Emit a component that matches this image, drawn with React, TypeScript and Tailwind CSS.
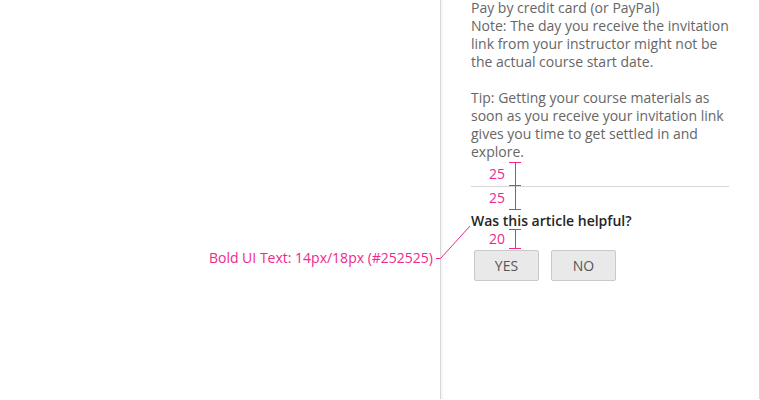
const PINK = "text-[#f0288c]";

function Spacer({ top, height, value }: { top: number; height: number; value: number }) {
  return (
    <div className="absolute left-[44px] flex items-center" style={{ top, height }}>
      <span className={`w-[20px] text-right text-[14px] leading-[18px] ${PINK}`}>{value}</span>
      <div className="relative ml-[4px] h-full w-[12px]">
        <div className="absolute left-0 top-0 h-px w-full bg-[#f0288c]" />
        <div className="absolute left-[5.5px] top-0 h-full w-px bg-[#f0288c]" />
        <div className="absolute bottom-0 left-0 h-px w-full bg-[#f0288c]" />
      </div>
    </div>
  );
}

export default function App() {
  return (
    <div className="relative h-[400px] w-[760px] overflow-hidden bg-white font-['Open_Sans','Noto_Sans',sans-serif]">
      <div className="ml-[440px] h-full w-[320px] border-l border-r border-[#d6d6d6] shadow-[inset_2px_0_2px_rgba(0,0,0,0.04)]">
        <div className="relative -mt-[1px] px-[30px] text-[14px] leading-[18px] text-[#666]">
          <p>Pay by credit card (or PayPal)</p>
          <p>Note: The day you receive the invitation link from your instructor might not be the actual course start date.</p>
          <p className="mt-[18px]">Tip: Getting your course materials as soon as you receive your invitation link gives you time to get settled in and explore.</p>
          <div className="mt-[25px] h-px bg-[#d9d9d9]" />
          <h3 className="mt-[25px] text-[14px] font-semibold leading-[18px] text-[#252525]">Was this article helpful?</h3>
          <div className="mt-[20px] flex gap-[12px] pl-[3px]">
            <button className="h-[31px] w-[65px] rounded-[2px] border border-[#c9c9c9] bg-[#e9e9e9] text-[14px] text-[#555]">YES</button>
            <button className="h-[31px] w-[65px] rounded-[2px] border border-[#c9c9c9] bg-[#e9e9e9] text-[14px] text-[#555]">NO</button>
          </div>
          <Spacer top={163} height={24} value={25} />
          <Spacer top={186} height={25} value={25} />
          <Spacer top={230} height={20} value={20} />
        </div>
      </div>
      <div className={`absolute right-[327px] top-[249px] text-[14px] leading-[18px] ${PINK}`}>
        Bold UI Text: 14px/18px (#252525)
      </div>
      <svg className="absolute left-0 top-0" width="760" height="400">
        <path d="M436 258.5 H440.5 L470 226" stroke="#f0288c" strokeWidth="1" fill="none" />
      </svg>
    </div>
  );
}
